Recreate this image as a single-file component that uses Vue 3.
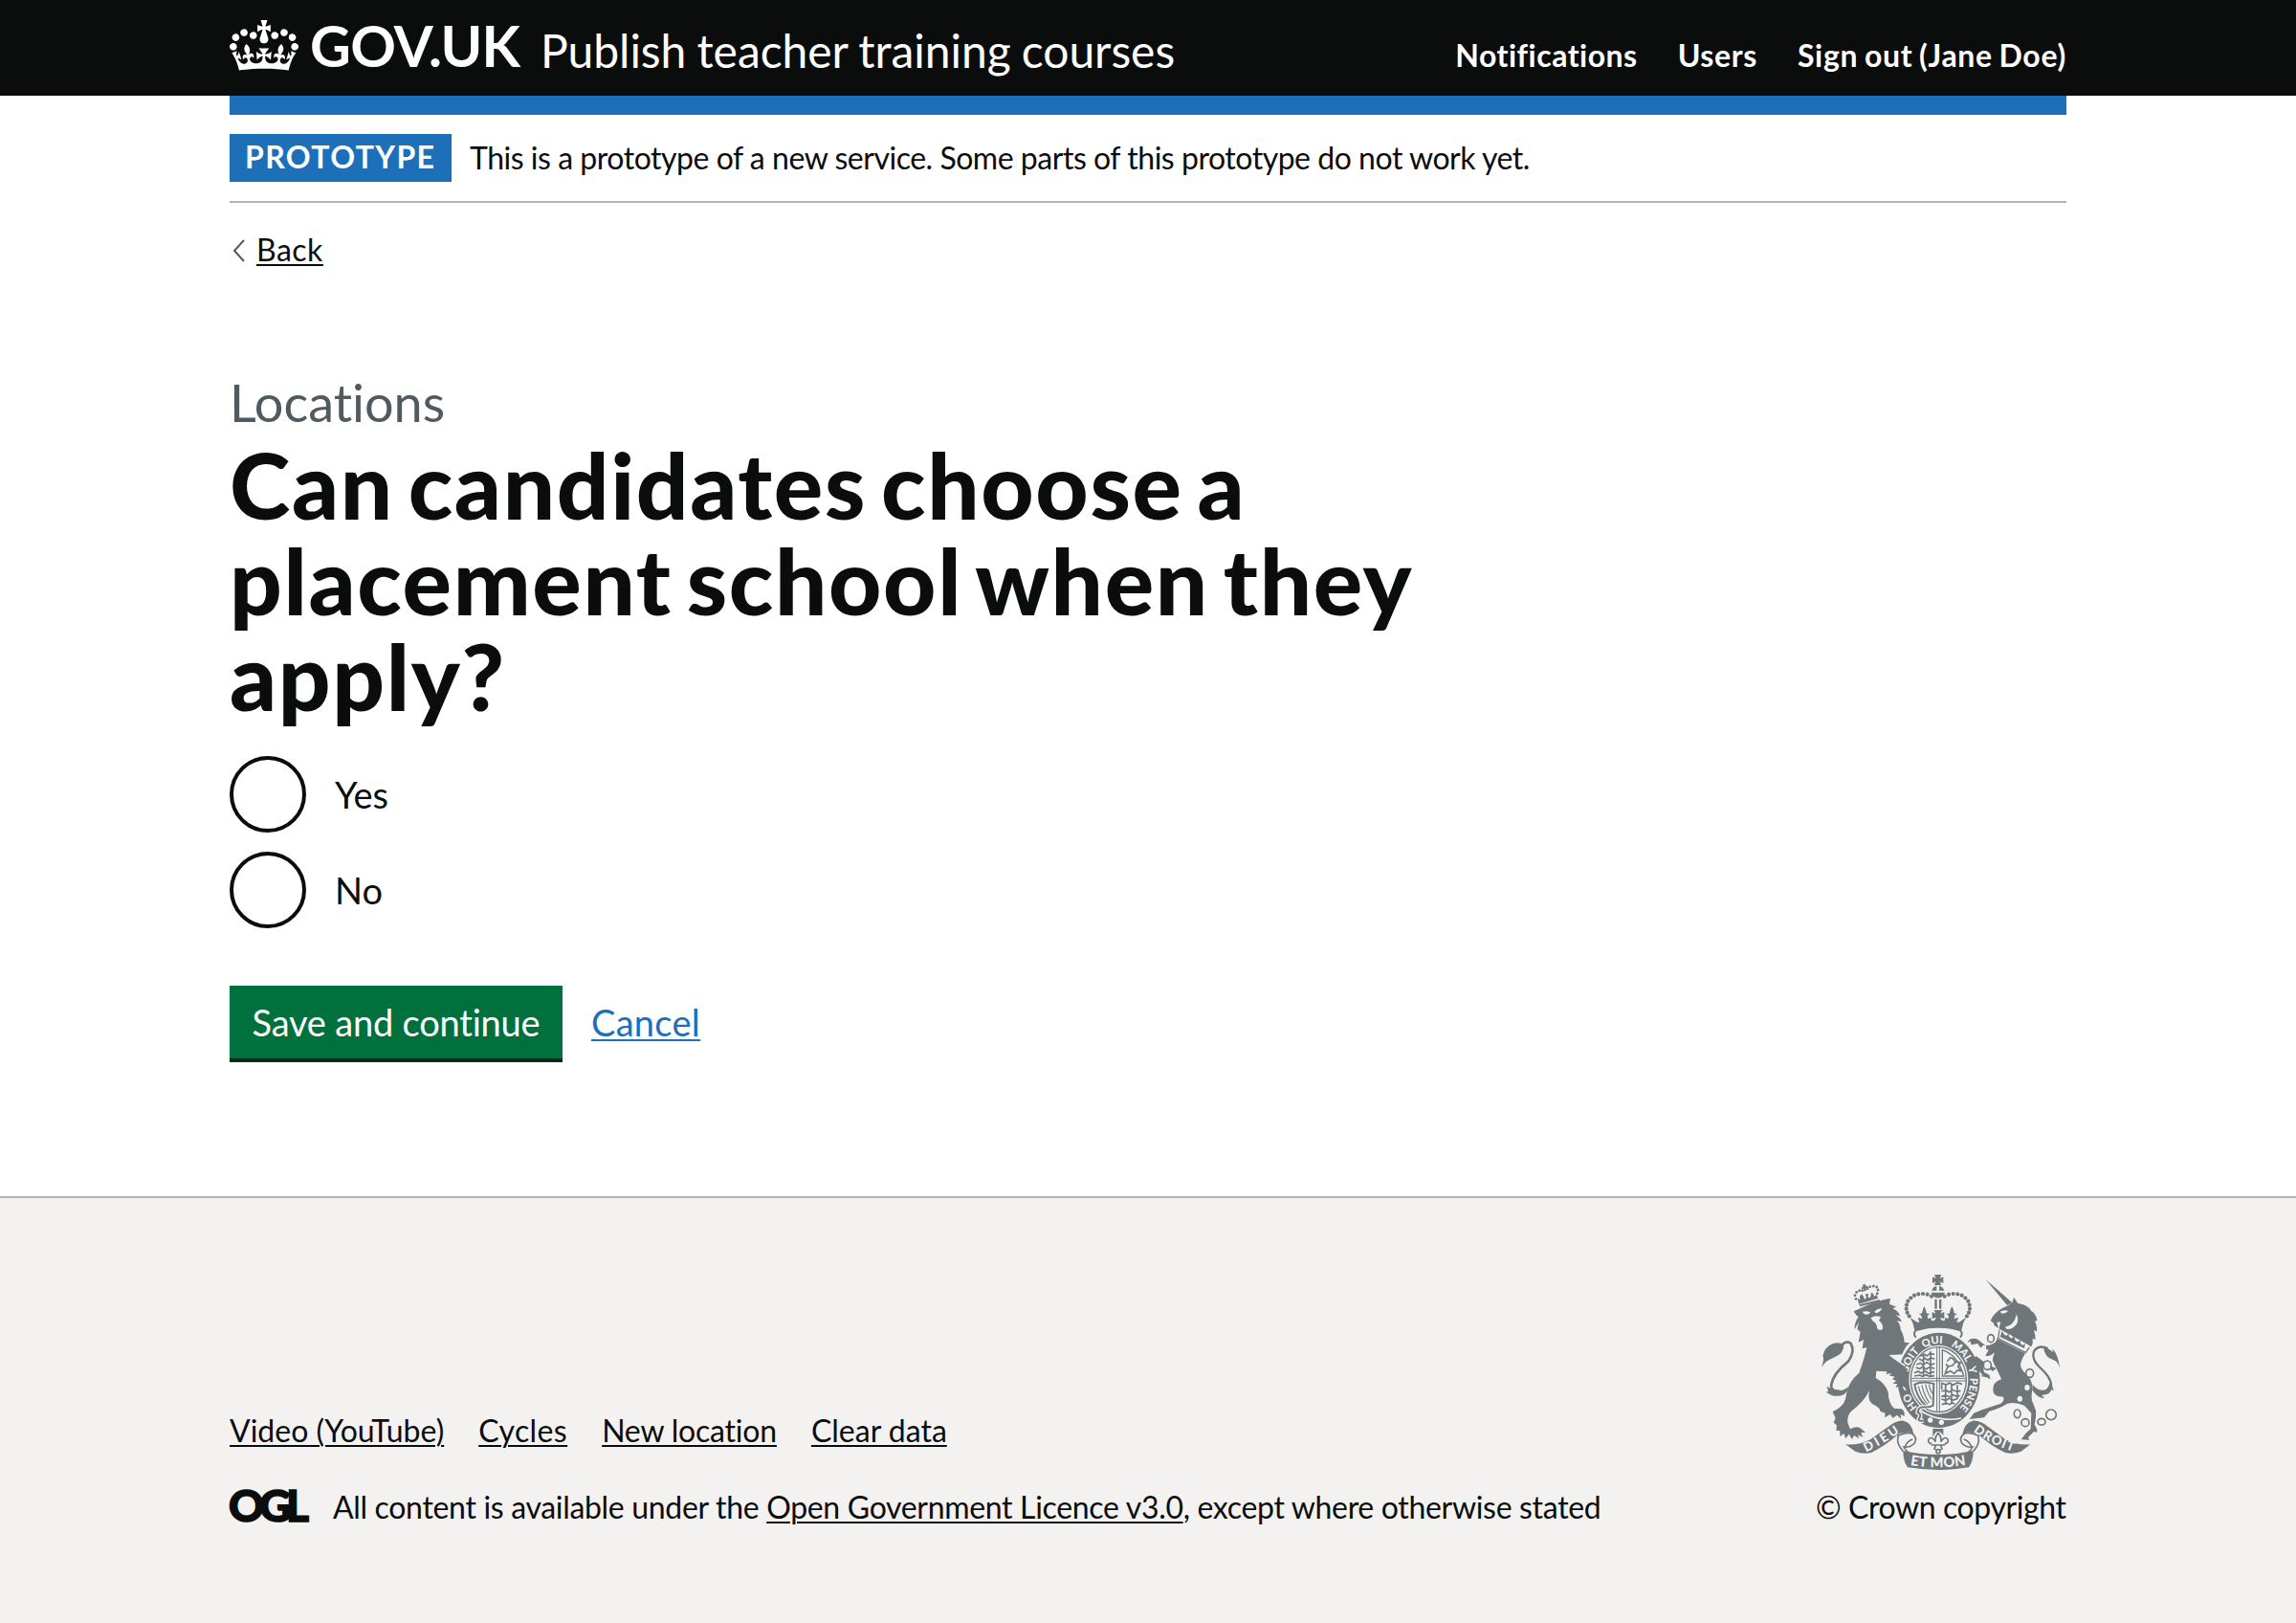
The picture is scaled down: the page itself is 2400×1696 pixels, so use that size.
<script setup>
import { ref } from 'vue'

const nav = [
  { label: 'Notifications', cls: 'nav-a' },
  { label: 'Users', cls: 'nav-b' },
  { label: 'Sign out (Jane Doe)', cls: 'nav-c' },
]
const options = ['Yes', 'No']
const choice = ref('')
const footerLinks = [
  { label: 'Video (YouTube)', cls: 'fl-a' },
  { label: 'Cycles', cls: 'fl-b' },
  { label: 'New location', cls: 'fl-c' },
  { label: 'Clear data', cls: 'fl-d' },
]

const leftPearls = [
  [387, 104], [374, 98], [360, 96], [346, 97], [333, 101], [322, 109],
  [313, 119], [309, 131], [308, 143], [311, 155], [317, 166],
]
const pearls = leftPearls.concat(leftPearls.map(([x, y]) => [815 - x, y]))
const lionPearls = [[150, 112], [147, 101], [152, 91], [161, 86], [170, 86], [186, 80], [194, 74], [205, 72], [215, 75], [219, 84], [217, 95]]
const garterWords = [
  { word: 'HO', at: 112 },
  { word: 'SOIT', at: 288 },
  { word: 'QUI', at: 425 },
  { word: 'MAL', at: 557 },
  { word: 'Y', at: 688 },
  { word: 'PENSE', at: 740 },
]
</script>

<template>
  <div class="page">
    <header class="header">
      <div class="container header-row">
        <svg class="crown" viewBox="0 0 132 97" width="72" height="53">
          <path fill="#fff" fill-rule="evenodd" d="M25 30.2c3.5 1.5 7.7-.2 9.1-3.7 1.5-3.6-.2-7.8-3.9-9.2-3.6-1.4-7.6.3-9.1 3.9-1.4 3.5.3 7.5 3.9 9zM9 39.5c3.6 1.5 7.8-.2 9.2-3.7 1.5-3.6-.2-7.8-3.9-9.1-3.6-1.5-7.6.2-9.1 3.8-1.4 3.5.3 7.5 3.8 9zM4.4 57.2c3.5 1.5 7.7-.2 9.1-3.8 1.5-3.6-.2-7.7-3.9-9.1-3.5-1.5-7.6.3-9.1 3.8-1.4 3.5.3 7.6 3.9 9.1zm38.3-21.4c3.5 1.5 7.7-.2 9.1-3.8 1.5-3.6-.2-7.7-3.9-9.1-3.6-1.5-7.6.3-9.1 3.8-1.3 3.6.4 7.7 3.9 9.1zm64.4-5.6c-3.6 1.5-7.8-.2-9.1-3.7-1.5-3.6.2-7.8 3.8-9.2 3.6-1.4 7.7.3 9.2 3.9 1.3 3.5-.4 7.5-3.9 9zm15.9 9.3c-3.6 1.5-7.7-.2-9.1-3.7-1.5-3.6.2-7.8 3.7-9.1 3.6-1.5 7.7.2 9.2 3.8 1.5 3.5-.3 7.5-3.8 9zm4.7 17.7c-3.6 1.5-7.8-.2-9.2-3.8-1.5-3.6.2-7.7 3.9-9.1 3.6-1.5 7.7.3 9.2 3.8 1.3 3.5-.4 7.6-3.9 9.1zM89.3 35.8c-3.6 1.5-7.8-.2-9.2-3.8-1.4-3.6.2-7.7 3.9-9.1 3.6-1.5 7.7.3 9.2 3.8 1.4 3.6-.3 7.7-3.9 9.1zM69.7 17.7l8.9 4.7V9.3l-8.9 2.8c-.2-.3-.5-.6-.9-.9L72.4 0H59.6l3.5 11.2c-.3.3-.6.5-.9.9l-8.8-2.8v13.1l8.8-4.7c.3.3.6.7.9.9l-5 15.4v.1c-.2.8-.4 1.6-.4 2.4 0 4.1 3.1 7.5 7 8.1h.2c.3 0 .7.1 1 .1.4 0 .7 0 1-.1h.2c4-.6 7.1-4.1 7.1-8.1 0-.8-.1-1.7-.4-2.4V34l-5.1-15.4c.4-.2.7-.6 1-.9zM66 92.8c16.9 0 32.8 1.1 47.1 3.2 4-16.9 8.9-26.7 14-33.5l-9.6-3.4c1 4.9 1.1 7.2 0 10.2-1.5-1.4-3-4.3-4.2-8.7L108.6 76c2.8-2 5-3.2 7.5-3.3-4.4 9.4-10 11.9-13.6 11.2-4.3-.8-6.3-4.6-5.6-7.9 1-4.7 5.7-5.9 8-.5 4.3-8.7-3-11.4-7.6-8.8 7.1-7.2 7.9-13.5 2.1-21.1-8 6.1-8.1 12.3-4.5 20.8-4.7-5.4-12.1-2.5-9.5 6.2 3.4-5.2 7.9-2 7.2 3.1-.6 4.3-6.4 7.8-13.5 7.2-10.3-.9-10.9-8-11.2-13.8 2.5-.5 7.1 1.8 11 7.3L80.2 60c-4.1 4.4-8 5.3-12.3 5.4 1.4-4.4 8-11.6 8-11.6H55.5s6.4 7.2 7.9 11.6c-4.2-.1-8-1-12.3-5.4l1.4 16.4c3.9-5.5 8.5-7.7 10.9-7.3-.3 5.8-.9 12.8-11.1 13.8-7.2.6-12.9-2.9-13.5-7.2-.7-5 3.8-8.3 7.1-3.1 2.7-8.7-4.6-11.6-9.4-6.2 3.7-8.5 3.6-14.7-4.6-20.8-5.8 7.6-5 13.9 2.2 21.1-4.7-2.6-11.9.1-7.7 8.8 2.3-5.5 7.1-4.2 8.1.5.7 3.3-1.3 7.1-5.7 7.9-3.5.7-9-1.8-13.5-11.2 2.5.1 4.7 1.3 7.5 3.3l-4.7-15.4c-1.2 4.4-2.7 7.2-4.3 8.7-1.1-3-.9-5.3 0-10.2l-9.5 3.4c5 6.9 9.9 16.7 14 33.5 14.8-2.1 30.8-3.2 47.7-3.2z" />
        </svg>
        <svg class="wordmark" viewBox="0 0 222 60" width="222" height="60">
          <text x="-1" y="50" textLength="220" lengthAdjust="spacing" class="wordmark-text">GOV.UK</text>
        </svg>
        <span class="service">Publish teacher training courses</span>
        <nav class="nav">
          <a v-for="n in nav" :key="n.label" :class="n.cls">{{ n.label }}</a>
        </nav>
      </div>
    </header>

    <div class="container">
      <div class="blue-bar"></div>
      <div class="phase">
        <strong class="tag">PROTOTYPE</strong>
        <span class="phase-text">This is a prototype of a new service. Some parts of this prototype do not work yet.</span>
      </div>
      <div class="back">
        <svg class="back-icon" viewBox="0 0 13 24" width="13" height="24">
          <path d="M12 1 2 12 12 23" fill="none" stroke="#505a5f" stroke-width="2" />
        </svg>
        <a class="back-link">Back</a>
      </div>

      <main class="main">
        <span class="caption">Locations</span>
        <h1 class="title">Can candidates choose a<br />placement school when they<br />apply?</h1>
        <div class="radios">
          <label v-for="o in options" :key="o" class="radio">
            <input v-model="choice" type="radio" name="placement" :value="o" class="radio-input" />
            <span>{{ o }}</span>
          </label>
        </div>
        <div class="actions">
          <button class="button" type="button">Save and continue</button>
          <a class="cancel">Cancel</a>
        </div>
      </main>
    </div>

    <footer class="footer">
      <div class="container footer-row">
        <div class="footer-left">
          <div class="footer-links">
            <a v-for="l in footerLinks" :key="l.label" :class="l.cls">{{ l.label }}</a>
          </div>
          <div class="licence">
            <svg class="ogl" viewBox="0 0 83 40" width="83" height="40">
              <text x="-1" y="36" textLength="84" lengthAdjust="spacing" class="ogl-text">OGL</text>
            </svg>
            <span class="licence-text">All content is available under the <a class="licence-link">Open Government Licence v3.0</a>, except where otherwise stated</span>
          </div>
        </div>

        <div class="footer-right">
          <svg class="arms" viewBox="30 30 780 621" width="260" height="207">
            <defs>
              <path id="garter" pathLength="1000" d="M410 482A98 115 0 0 1 410 252A98 115 0 0 1 410 482" />
              <path id="dieu" d="M182 592Q232 570 290 528" />
              <path id="droit" d="M518 526Q572 570 660 596" />
              <path id="etmon" d="M316 632Q408 648 500 632" />
            </defs>

            <!-- royal crown -->
            <g class="ink">
              <path d="M396 36h22l-5 12 11-5v20l-11-5 5 11h-22l5-11-11 5V43l11 5z" />
              <path d="M388 86Q390 74 403 71V86zM411 71Q424 74 427 86H411z" />
              <path d="M386 92H429Q424 108 408 109Q391 108 386 92z" />
              <path d="M397 113h7v30h-7zM411 113h7v30h-7z" />
              <circle v-for="([x, y], i) in pearls" :key="i" :cx="x" :cy="y" r="6.2" />
              <path d="M320 170L334 180Q342 188 350 184Q344 176 345 170L358 175L354 163L346 158Q356 160 358 154Q358 146 364 136Q371 146 371 155Q374 161 384 157L374 165L376 174L386 171Q384 180 390 181Q399 180 401 170L389 174V153L400 158L395 147H421L415 158L427 153V174L414 170Q417 180 425 181Q431 180 429 171L439 174L441 165L431 157Q441 161 444 155Q444 146 451 136Q458 146 458 155Q460 160 469 158L461 163L457 175L470 170Q471 176 465 184Q473 188 481 180L495 170Q484 188 481 211Q407 192 334 211Q331 188 320 170z" />
            </g>
            <path d="M338 233Q326 216 342 209Q407 190 473 209Q489 216 477 233" class="line" stroke-width="6" />

            <!-- garter and shield -->
            <ellipse cx="410" cy="367" rx="129" ry="149" class="ink" />
            <ellipse cx="409" cy="365" rx="93" ry="108" class="paper" />
            <ellipse cx="409" cy="365" rx="87" ry="102" fill="none" class="line" stroke-width="4" />
            <path d="M404 262V466M412 262V466M322 361H496M322 369H496" class="line" stroke-width="3" />
            <g class="line" stroke-width="5">
              <path d="M352 292l12-7 8 6 9-8 15 3M348 300l10 5 8-7 10 6 8-8 13 5M340 318l12-5 8 6 12-8 12 8 13-5M338 327l12 4 9-6 11 7 11-6 16 4M333 344l12-5 10 6 11-7 12 7 18-5M333 354l16-3 10 4 12-5 10 5 15-2M362 285v68M384 276v76" />
              <path d="M419 396V376l14 5 10-6 12 7 13-7 15 4M418 402l14-4 10 6 12-7 14 7 10-5M418 418l13-4 12 5 12-6 14 6 6-5M418 426l14 4 11-6 12 5 12-4M419 443l13-5 11 5 10-5 7 4M431 380v64M450 380v62M468 382v45" />
              <path d="M430 346l8-22 14-3 12-12 14 3-8 12 10 14-12-2-10 10-12-8zM436 308l10-12 9 4 8 12M442 326l-10-10" />
            </g>
            <path d="M421 354V272Q470 288 488 354z" class="line" stroke-width="4" />
            <g class="line" stroke-width="3.5">
              <path d="M334 380Q360 368 394 378L392 446Q378 455 368 446Q340 420 334 380z" stroke-width="6" />
              <path d="M346 386Q352 416 374 442M357 382Q362 410 380 438M368 380Q372 402 386 426M379 380Q381 394 389 408" />
            </g>
            <path d="M335 462Q405 512 496 478L470 498L440 478L350 488z" class="ink" />
            <path d="M352 462Q410 500 480 486" class="cut" stroke-width="5" />
            <circle cx="383" cy="492" r="8" class="paper" />
            <circle cx="418" cy="499" r="8" class="paper" />
            <path d="M372 452Q346 446 344 468Q356 474 350 484Q340 496 362 494" class="cut" stroke-width="14" />
            <path d="M372 452Q346 446 344 468Q356 474 350 484Q340 496 362 494" class="line" stroke-width="6" />
            <text v-for="g in garterWords" :key="g.word" class="motto garter-text"><textPath href="#garter" :startOffset="g.at">{{ g.word }}</textPath></text>

            <!-- lion -->
            <g class="ink">
              <circle v-for="([x, y], i) in lionPearls" :key="i" :cx="x" :cy="y" r="4.2" />
              <path d="M170 68l10-3 1 7 6-1 1 6-7 2 1 8-7 1-1-8-6 1-1-6 6-1z" />
              <path d="M155 110l8 5-1-12 7-6 5 8 3 8 6-4-4-12 10-1-1 11 6 2 3-8 0-9 8 4 2 9 8-7 4 12-60 18z" />
              <path d="M160 130L224 114 225 119 163 136z" />
              <path d="M143 151L165 141Q200 122 243 113L258 110L255 128L277 137L265 142Q284 150 288 166L274 162Q292 174 293 184L279 180Q291 196 290 208Q302 230 302 248L318 250Q304 262 295 286L258 288L300 318Q316 340 312 372L318 390L306 386L308 398L298 390L290 398L287 386L274 390L280 378L266 378L276 368L264 364L272 356L254 352L262 344L244 348L248 340L214 338L212 360Q242 376 251 404Q252 440 270 455L293 457Q304 464 302 480L290 474L292 488L278 476L266 486L258 474L240 484L242 470L226 464Q228 454 200 440Q186 430 192 400Q174 436 138 462Q122 474 124 500L132 520Q150 510 162 516L180 530L166 532L172 546L156 538L160 550L144 540L138 552L128 536L118 550L112 534L100 544L100 526L88 524L90 508L80 500L86 486L77 466L94 456Q118 440 120 410Q126 372 160 344Q176 300 184 264L170 268L174 240L158 248L164 216L154 206Q156 196 160 184L145 208Q146 184 158 168L152 164z" />
              <path d="M42 326Q52 300 46 290Q52 262 78 252Q98 246 112 256Q112 286 80 296Q56 304 42 326z" />
              <path d="M92 398Q74 396 58 386L64 402L56 404Q84 424 112 412Q124 404 126 388Q110 402 92 398z" />
            </g>
            <path d="M106 256Q120 240 134 252Q148 276 126 308Q78 346 72 384Q74 404 98 400" class="line" stroke-width="8" />
            <path d="M170 152Q184 148 196 154Q190 164 176 160zM208 152Q218 142 232 142Q226 156 212 156z" class="paper" />
            <path d="M196 172Q210 162 228 168L222 180Q236 190 234 206Q224 214 216 204Q216 188 204 182z" class="paper" />
            <path d="M257 288L304 322M298 388L306 398" class="cut" stroke-width="5" />

            <!-- unicorn -->
            <g class="ink">
              <path d="M557 51L640 124 624 132z" />
              <path d="M572 180L580 166Q596 144 624 134L640 124L645 107L658 126Q690 130 700 150Q716 160 718 180L711 182Q720 200 717 214L708 210Q714 228 712 240L704 236Q706 252 700 262L598 212Q600 194 604 184L592 186L598 204L584 196L582 188z" />
              <path d="M595 230L688 274Q670 296 666 318Q668 334 682 346Q704 366 704 396Q696 424 706 440L714 462Q716 480 710 506Q720 520 718 530L708 528L690 546L694 554L668 553L684 532L698 520L700 470L678 446Q650 434 625 440Q600 456 568 464L552 484L506 489L520 470L545 460L604 440Q620 430 610 418Q582 420 580 400Q578 372 606 364L602 354Q594 336 584 318Q574 302 584 284L580 268z" />
              <path d="M590 270Q576 296 556 290L566 272L538 262L532 252L512 256L508 244L500 250Q504 232 530 238L556 258Q574 260 592 244z" />
              <path d="M590 330L560 316L528 292L518 296L530 330L548 352L540 354L560 358L572 364L568 350L552 342L548 322L580 338z" />
              <path d="M790 332Q784 308 770 304Q742 296 738 264Q756 266 768 280L766 268Q784 286 790 332z" />
              <path d="M704 398Q716 420 742 424L732 414Q762 412 762 396L770 400Q766 380 758 374Q752 400 734 398Q716 396 704 380z" />
            </g>
            <path d="M752 268Q724 254 708 276Q700 300 724 324Q764 360 762 384Q758 408 730 402" class="line" stroke-width="7" />
            <path d="M600 206L694 258L684 284L594 238z" class="paper" />
            <path d="M600 210L596 236L682 280L694 264" class="line" stroke-width="4" />
            <path d="M602 231l6-18 8 12 8 2 3-8 4 12 8 5 6-10 5 17 8 4 7-6 1 12 8 4 7-5-3 15z" class="ink" />
            <path d="M602 152Q614 144 628 150Q620 158 608 158zM654 160Q666 190 640 204Q620 212 618 200Q646 196 654 160z" class="paper" />
            <g class="ring">
              <ellipse cx="573" cy="236" rx="10" ry="12" />
              <ellipse cx="562" cy="320" rx="12" ry="14" />
              <ellipse cx="695" cy="345" rx="12" ry="13" />
              <ellipse cx="656" cy="472" rx="10" ry="13" />
              <ellipse cx="681" cy="500" rx="12" ry="12" />
              <ellipse cx="732" cy="497" rx="12" ry="10" />
              <circle cx="762" cy="475" r="16" />
            </g>
            <g class="paper">
              <circle cx="552" cy="264" r="7" />
              <ellipse cx="687" cy="390" rx="8" ry="9" />
              <ellipse cx="664" cy="425" rx="8" ry="9" />
            </g>

            <!-- motto ribbon and fleur-de-lis -->
            <g class="ink">
              <path d="M117 568Q160 572 196 552L250 514Q276 492 300 494Q326 500 331 536Q320 528 308 530L286 534Q240 574 198 594Q170 600 148 590Z" />
              <path d="M697 568Q654 572 618 552L566 514Q540 492 516 494Q490 500 484 536Q496 528 508 530L530 534Q574 574 618 594Q644 600 668 590Z" />
              <path d="M298 588Q408 612 518 588Q518 622 504 640Q408 656 312 640Q298 622 298 588z" />
              <path d="M391 519H424V540Q416 528 408 528Q398 528 391 545z" />
            </g>
            <g class="line" stroke-width="5">
              <path d="M284 536Q276 558 288 576L298 590M284 540Q308 528 326 534Q344 548 334 564Q318 580 300 576Q306 588 316 594M304 575Q312 556 328 552" />
              <path d="M532 536Q540 558 528 576L518 590M532 540Q508 528 490 534Q472 548 482 564Q498 580 516 576Q510 588 500 594M512 575Q504 556 488 552" />
              <path d="M408 532Q396 546 400 560Q388 540 378 552Q374 564 388 566M408 532Q420 546 416 560Q428 540 438 552Q442 564 428 566M386 570H430M400 572L396 582L402 584M416 572L420 582L414 584" />
              <circle cx="408" cy="590" r="6" />
            </g>
            <g class="motto">
              <text><textPath href="#dieu" textLength="122" lengthAdjust="spacing">DIEU</textPath></text>
              <text><textPath href="#droit" textLength="140" lengthAdjust="spacing">DROIT</textPath></text>
              <text class="etmon"><textPath href="#etmon" startOffset="4" textLength="176" lengthAdjust="spacing">ET MON</textPath></text>
            </g>
          </svg>
          <span class="copyright">© Crown copyright</span>
        </div>
      </div>
    </footer>
  </div>
</template>

<style>
body {
  margin: 0;
  background: #f3f2f1;
}
</style>

<style scoped>
.page {
  display: flex;
  flex-direction: column;
  min-height: 1696px;
  background: #fff;
  color: #0b0c0c;
  font-family: Lato, "Liberation Sans", sans-serif;
  font-size: 32px;
  font-variant-ligatures: none;
}
.container {
  width: 1920px;
  margin: 0 auto;
}
a {
  text-decoration-line: underline;
  text-decoration-thickness: 2px;
  text-underline-offset: 3px;
}

.header {
  height: 100px;
  background: #0b0c0c;
  color: #fff;
}
.header-row {
  display: flex;
  align-items: flex-start;
}
.crown {
  display: block;
  margin-top: 21px;
}
.wordmark {
  display: block;
  margin: 20px 0 0 13px;
  overflow: visible;
}
.wordmark-text {
  fill: #fff;
  font-size: 59px;
  font-weight: 700;
}
.service {
  margin: 23px 0 0 17px;
  padding-left: 1px;
  font-size: 48px;
  line-height: 60px;
  letter-spacing: -0.05px;
  word-spacing: -1px;
}
.nav {
  display: flex;
  margin: 38px 0 0 auto;
  line-height: 40px;
  font-weight: 700;
}
.nav a {
  text-decoration: none;
}
.nav-a { letter-spacing: 0.5px; margin-right: 42px; }
.nav-b { letter-spacing: 0.6px; margin-right: 42px; }
.nav-c { letter-spacing: 0.7px; word-spacing: -1.8px; }

.blue-bar {
  height: 20px;
  background: #1d70b8;
}
.phase {
  display: flex;
  align-items: flex-start;
  padding: 20px 0;
  border-bottom: 2px solid #b1b4b6;
}
.tag {
  width: 232px;
  height: 50px;
  box-sizing: border-box;
  padding-left: 16px;
  background: #1d70b8;
  color: #fff;
  line-height: 48px;
  letter-spacing: 1.4px;
}
.phase-text {
  margin-left: 19px;
  line-height: 49px;
  letter-spacing: -0.47px;
}
.back {
  display: flex;
  align-items: center;
  height: 40px;
  margin-top: 28px;
}
.back-icon {
  margin: 4px 12px 0 3px;
}
.back-link {
  letter-spacing: 0.5px;
}

.main {
  display: flex;
  flex-direction: column;
  padding-top: 111px;
}
.caption {
  padding-bottom: 5px;
  color: #505a5f;
  font-size: 54px;
  line-height: 60px;
}
.title {
  margin: 0;
  font-size: 96px;
  font-weight: 900;
  line-height: 100px;
  letter-spacing: 1.65px;
  word-spacing: -9.5px;
}
.radios {
  display: flex;
  flex-direction: column;
  gap: 20px;
  margin-top: 34px;
}
.radio {
  display: flex;
  align-items: center;
  gap: 30px;
  font-size: 38px;
}
.radio-input {
  appearance: none;
  box-sizing: border-box;
  width: 80px;
  height: 80px;
  margin: 0;
  border: 4px solid #0b0c0c;
  border-radius: 50%;
  background: transparent;
}
.actions {
  display: flex;
  align-items: flex-start;
  margin-top: 60px;
}
.button {
  width: 348px;
  height: 80px;
  padding: 0 0 4px;
  border: 0;
  background: #00703c;
  box-shadow: inset 0 -4px 0 #002d18;
  color: #fff;
  font-family: inherit;
  font-size: 38px;
  line-height: 75px;
  letter-spacing: -0.2px;
}
.cancel {
  margin-left: 30px;
  color: #1d70b8;
  font-size: 38px;
  line-height: 77px;
  letter-spacing: 0.3px;
}

.footer {
  flex: 1;
  margin-top: 140px;
  padding-top: 78px;
  border-top: 2px solid #b1b4b6;
  background: #f3f2f1;
}
.footer-row {
  display: flex;
  justify-content: space-between;
  align-items: flex-end;
}
.footer-links {
  display: flex;
  gap: 36px;
  line-height: 40px;
  margin-bottom: 40px;
}
.fl-b { letter-spacing: 0.4px; }
.fl-c { letter-spacing: -0.2px; }
.licence {
  display: flex;
  align-items: center;
  line-height: 40px;
}
.licence-text {
  margin-left: 25px;
  letter-spacing: -0.32px;
  white-space: nowrap;
}
.ogl {
  display: block;
  margin-top: -3px;
  overflow: visible;
}
.ogl-text {
  fill: #0b0c0c;
  stroke: #0b0c0c;
  stroke-width: 1.6;
  font-size: 46px;
  font-weight: 900;
}
.footer-right {
  display: flex;
  flex-direction: column;
  width: 260px;
}
.arms {
  display: block;
  overflow: visible;
}
.copyright {
  margin: 18px 0 0 -2px;
  line-height: 40px;
  letter-spacing: -0.4px;
  white-space: nowrap;
}

.ink { fill: #6f777b; }
.paper { fill: #f3f2f1; }
.line { fill: none; stroke: #6f777b; }
.cut { fill: none; stroke: #f3f2f1; }
.ring { fill: #f3f2f1; stroke: #6f777b; stroke-width: 5; }
.motto {
  fill: #f3f2f1;
  font-size: 40px;
  font-weight: 900;
}
.garter-text { font-size: 33px; }
.etmon { font-size: 44px; }
</style>
